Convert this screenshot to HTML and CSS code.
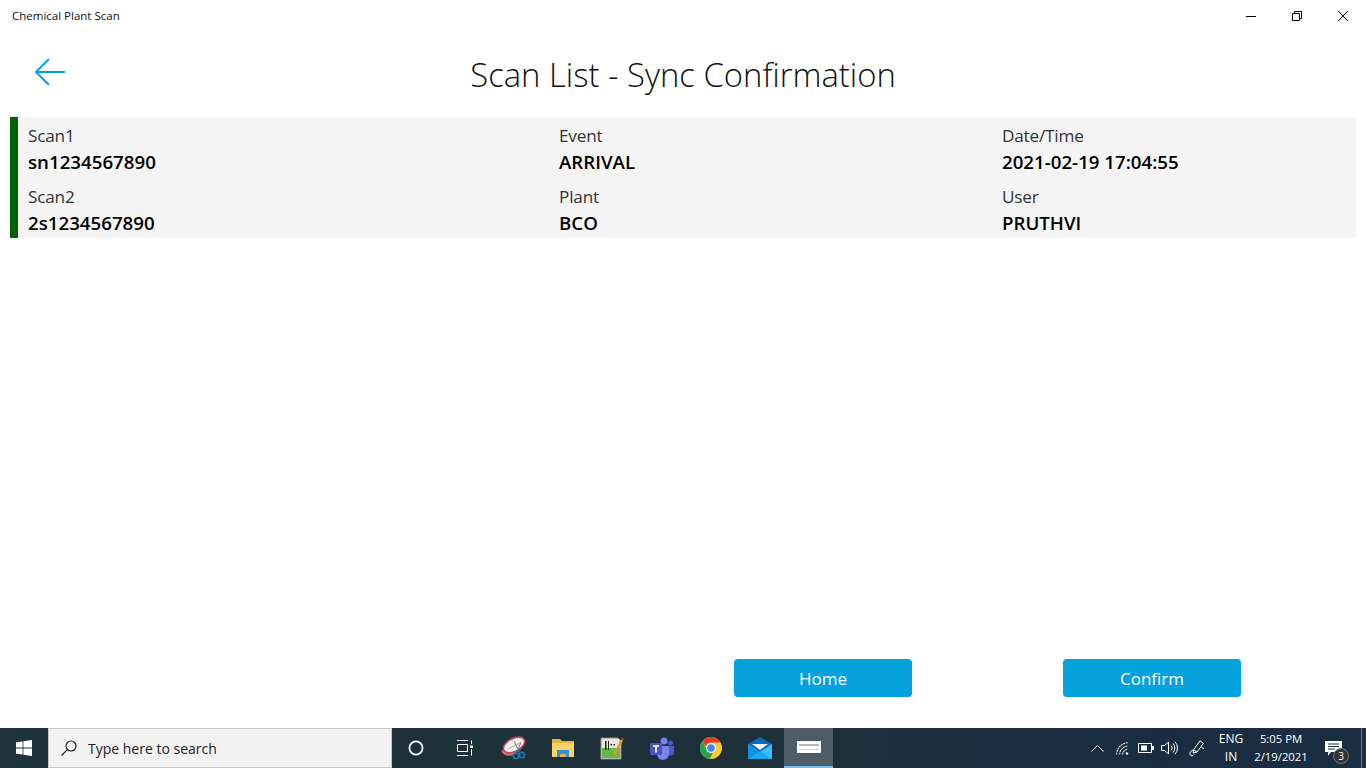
FILE: index.html
```html
<!DOCTYPE html>
<html lang="en">
<head>
<meta charset="utf-8">
<title>Chemical Plant Scan</title>
<link rel="stylesheet" href="styles.css">
</head>
<body>
<div class="window">
  <header class="titlebar">
    <span class="app-name">Chemical Plant Scan</span>
    <div class="win-controls">
      <svg class="win-btn" viewBox="0 0 46 30"><path d="M18 15.5h10" stroke="#000" fill="none"/></svg>
      <svg class="win-btn" viewBox="0 0 46 30"><path d="M18.5 12.5h7v7h-7zM20.5 12.5v-2h7v7h-2" stroke="#000" fill="none"/></svg>
      <svg class="win-btn" viewBox="0 0 46 30"><path d="M18 10l10 10M28 10l-10 10" stroke="#000" fill="none"/></svg>
    </div>
  </header>
  <div class="heading">
    <svg class="back" viewBox="0 0 32 28"><path d="M31 14H2M15 1L2 14l13 13" stroke="#05a1dd" stroke-width="2" fill="none"/></svg>
    <h1>Scan List - Sync Confirmation</h1>
  </div>
  <section class="card">
    <div class="col c1">
      <div class="lab">Scan1</div><div class="val">sn1234567890</div>
      <div class="lab">Scan2</div><div class="val">2s1234567890</div>
    </div>
    <div class="col c2">
      <div class="lab">Event</div><div class="val">ARRIVAL</div>
      <div class="lab">Plant</div><div class="val">BCO</div>
    </div>
    <div class="col c3">
      <div class="lab">Date/Time</div><div class="val">2021-02-19 17:04:55</div>
      <div class="lab">User</div><div class="val">PRUTHVI</div>
    </div>
  </section>
  <div class="actions">
    <button class="btn">Home</button>
    <button class="btn">Confirm</button>
  </div>
</div>
<footer class="taskbar">
  <div class="start">
    <svg width="16" height="16" viewBox="0 0 16 16"><path fill="#fff" d="M0 2.3l6.6-.9v6.2H0zM7.4 1.3L16 0v7.6H7.4zM0 8.4h6.6v6.2L0 13.7zM7.4 8.4H16V16l-8.6-1.3z"/></svg>
  </div>
  <div class="search">
    <svg width="18" height="18" viewBox="0 0 18 18"><circle cx="11" cy="7" r="5" fill="none" stroke="#222" stroke-width="1.2"/><path d="M7.4 10.6L1.5 16.5" stroke="#222" stroke-width="1.2"/></svg>
    <span>Type here to search</span>
  </div>
  <div class="tb-icons">
    <div class="tb"><svg width="16" height="16" viewBox="0 0 16 16"><circle cx="8" cy="8" r="6.6" fill="none" stroke="#fff" stroke-width="1.8"/></svg></div>
    <div class="tb"><svg width="16" height="16" viewBox="0 0 16 16"><path d="M0 .5h11M0 15.5h11M.5 4.500h10v7H.5zM14.500 .5v3.500M14.500 9v6.500" fill="none" stroke="#fff"/><rect x="13" y="5.500" width="3" height="2.500" fill="#fff"/></svg></div>
    <div class="tb"><svg width="26" height="24" viewBox="0 0 26 24"><ellipse cx="8" cy="15.5" rx="7" ry="4" fill="#9a9a9a" stroke="#c44"/><ellipse cx="13" cy="9" rx="11.5" ry="6.5" transform="rotate(-28 13 9)" fill="#f2f0f0" stroke="#c9444c" stroke-width="1.6"/><path d="M7 13L19 7" stroke="#c9a0a0"/><path d="M13 5l5 10M20 6l-4 10" stroke="#777" stroke-width="1"/><path d="M16 14l1.5 3M19 13l-2 4" stroke="#1e78b4" stroke-width="1.6"/><circle cx="15" cy="20" r="2.7" fill="none" stroke="#1e78b4" stroke-width="1.6"/><circle cx="21" cy="19" r="2.7" fill="none" stroke="#1e78b4" stroke-width="1.6"/></svg></div>
    <div class="tb"><svg width="22" height="18" viewBox="0 0 22 18"><path d="M0 0h8l2 2h12v16H0z" fill="#e8b33c"/><path d="M0 4h22v14H0z" fill="#fcd36a"/><path d="M5 18v-7h12v7h-3v-3H8v3z" fill="#2f8fd8"/><path d="M8 15h6v3H8z" fill="#e8b33c"/></svg></div>
    <div class="tb"><svg width="24" height="24" viewBox="0 0 24 24"><path d="M1 2h17l3 3v18H1z" fill="#e8e8de" stroke="#8a8a80"/><path d="M2 12h18v10H2z" fill="#63bb46"/><path d="M5 5h1.5v9H5zM8 5h1v9H8zM10.5 8H12v1.500h-1.500zM13.500 8H15v1.500h-1.500z" fill="#222"/><path d="M14 19L22 4" stroke="#dd9a2c" stroke-width="2.5"/><path d="M22 4l1-2" stroke="#c0392b" stroke-width="2.5"/></svg></div>
    <div class="tb"><svg width="24" height="23" viewBox="0 0 24 23"><circle cx="14" cy="4" r="3.5" fill="#7b83eb"/><circle cx="20.5" cy="6" r="2.5" fill="#5059c9"/><path d="M17 9h7v6a3.500 3.500 0 0 1-7 0z" fill="#5059c9"/><path d="M7 9h12v8a6 6 0 0 1-12 0z" fill="#7b83eb"/><rect x="0" y="6" width="12" height="12" rx="1" fill="#4b53bc"/><path d="M3 9h6M6 9v6.500" stroke="#fff" stroke-width="1.7"/></svg></div>
    <div class="tb"><svg width="22" height="22" viewBox="0 0 24 24"><circle cx="12" cy="12" r="12" fill="#fcc934"/><path d="M12 0a12 12 0 0 1 10.400 6H12a6 6 0 0 0-5.600 4L2.500 4.500A12 12 0 0 1 12 0z" fill="#e33b2e"/><path d="M2.500 4.500l5.300 9.800a5 5 0 0 0 6.200 3L10.500 24A12 12 0 0 1 2.500 4.500z" fill="#2ca24c"/><circle cx="12" cy="12" r="5.4" fill="#fff"/><circle cx="12" cy="12" r="4.2" fill="#4285f4"/></svg></div>
    <div class="tb"><svg width="24" height="22" viewBox="0 0 24 22"><path d="M0 7L12 0l12 7v7H0z" fill="#0f6cbd"/><path d="M4 7h16l-8 6z" fill="#f2f2f2"/><path d="M0 7l12 8v7H0z" fill="#1490df"/><path d="M24 7L12 15v7h12z" fill="#33c1f5"/><path d="M0 22l12-8 12 8z" fill="#1aa8ec"/></svg></div>
    <div class="tb active"><div class="thumb"><span class="thumb-dark"></span><span class="thumb-blue"></span></div></div>
  </div>
  <div class="tray">
    <svg class="tr chev" width="13" height="7" viewBox="0 0 13 7"><path d="M.5 6.5l6-6 6 6" fill="none" stroke="#fff"/></svg>
    <svg class="tr wifi" width="13" height="13" viewBox="0 0 13 13"><path d="M.7 12.500A11.500 11.500 0 0 1 12 .8M3.700 12.500A8.500 8.500 0 0 1 12 4M6.700 12.500A5.500 5.500 0 0 1 11.500 7.200" fill="none" stroke="#e6e6e6" stroke-width="1.1" stroke-dasharray="2 .6"/><circle cx="11" cy="11.5" r="1.3" fill="#fff"/></svg>
    <svg class="tr batt" width="16" height="10" viewBox="0 0 16 10"><path d="M.5 .5h13v9H.5z" fill="none" stroke="#fff"/><rect x="3" y="2.5" width="6" height="5" fill="#fff"/><rect x="14" y="3" width="2" height="4" fill="#fff"/></svg>
    <svg class="tr vol" width="17" height="14" viewBox="0 0 17 14"><path d="M.5 4.500h3l4-3.500v12l-4-3.500h-3z" fill="none" stroke="#fff"/><path d="M10 4.500a3.500 3.500 0 0 1 0 5M12 2.500a6.500 6.500 0 0 1 0 9M14 .8a9 9 0 0 1 0 12.400" fill="none" stroke="#fff"/></svg>
    <svg class="tr pen" width="16" height="17" viewBox="0 0 16 17"><path d="M11 .8l3.500 2.500L8 12l-3.300-2.300zM4.700 9.700L4 13l4-1M12.500 7.500l2.500 1M5 10C2 10 .5 12.500 1 14.500c.5 1.800 3 1.800 4 0" fill="none" stroke="#fff"/></svg>
    <div class="lang"><span>ENG</span><span>IN</span></div>
    <div class="clock"><span>5:05 PM</span><span>2/19/2021</span></div>
    <div class="notif">
      <svg width="17" height="15" viewBox="0 0 17 15"><path d="M0 0h17v11H6l-3 4v-4H0z" fill="#fff"/><path d="M3 3h11M3 5.5h11M3 8h7" stroke="#1c2f3a"/></svg>
      <span class="badge">3</span>
    </div>
    <div class="peek"></div>
  </div>
</footer>
</body>
</html>
```
FILE: styles.css
```css
* { box-sizing: border-box; }
html, body { margin: 0; height: 100%; }
body { width: 1366px; height: 768px; overflow: hidden; background: #fff; font-family: "Open Sans", "Noto Sans", sans-serif; display: flex; flex-direction: column; color: #000; }
.window { height: 728px; display: flex; flex-direction: column; }
.titlebar { height: 32px; display: flex; justify-content: space-between; align-items: center; padding-left: 12px; flex: none; }
.app-name { font-size: 11.5px; color: #111; position: relative; bottom: 1px; }
.win-controls { display: flex; }
.win-btn { width: 46px; height: 30px; display: block; }
.heading { height: 85px; flex: none; display: flex; align-items: center; justify-content: center; position: relative; }
.heading h1 { margin: 0; font-size: 32.8px; font-weight: 300; color: #111; }
.back { position: absolute; left: 34px; top: 26px; width: 32px; height: 28px; }
.card { margin: 0 10px; height: 121px; flex: none; background: #f4f4f4; border-left: 8px solid #006400; padding: 5px 0 0 10px; display: grid; grid-template-columns: 531px 443px 1fr; }
.lab { font-size: 17.2px; line-height: 27px; height: 27px; color: #333; letter-spacing: -0.2px; }
.val { font-size: 18.7px; line-height: 26px; height: 34px; font-weight: 600; color: #000; }
.actions { margin-top: 421px; display: flex; padding-left: 734px; gap: 151px; }
.btn { width: 178px; height: 38px; border: 0; border-radius: 4px; background: #05a1dd; color: #fff; font: 400 17px "Open Sans", sans-serif; padding: 0; }
.taskbar { height: 40px; flex: none; background: linear-gradient(90deg, #1f333b 0%, #1d3039 55%, #1a2c42 85%, #1b2d40 100%); display: flex; align-items: stretch; color: #fff; }
.start { width: 48px; display: flex; align-items: center; justify-content: center; }
.search { width: 344px; background: #f2f2f2; border: 1px solid #c6c6c6; display: flex; align-items: center; gap: 10px; padding-left: 11px; color: #222; font-size: 14px; }
.tb-icons { display: flex; margin-left: -0.5px; }
.tb { width: 49.1px; display: flex; align-items: center; justify-content: center; }
.tb.active { background: #4d5c66; border-bottom: 2px solid #76b9ed; }
.thumb { width: 24px; height: 12px; background: #fff; display: flex; flex-direction: column; align-items: center; justify-content: center; gap: 3px; }
.thumb-dark { width: 20px; height: 2px; background: #b5b9bb; }
.thumb-blue { width: 22px; height: 1px; background: #bcdcec; }
.tray { margin-left: auto; display: flex; align-items: center; font-size: 12px; color: #fff; }
.tr { flex: none; }
.chev { margin-right: 12px; }
.wifi { margin-right: 9px; }
.batt { margin-right: 7px; }
.vol { margin-right: 11px; }
.lang, .clock { display: flex; flex-direction: column; align-items: center; line-height: 18px; }
.lang { margin-left: 11px; width: 30px; }
.clock { width: 66px; margin-left: 2px; font-size: 11.3px; }
.notif { position: relative; width: 40px; height: 30px; margin-left: 6px; display: flex; align-items: center; padding-left: 5px; }
.badge { position: absolute; left: 13px; top: 15px; width: 16px; height: 16px; border-radius: 50%; background: #333; border: 1px solid #777; font-size: 10px; line-height: 14px; text-align: center; }
.peek { width: 5px; height: 40px; border-left: 1px solid #6a7a84; margin-left: 1px; }
```
